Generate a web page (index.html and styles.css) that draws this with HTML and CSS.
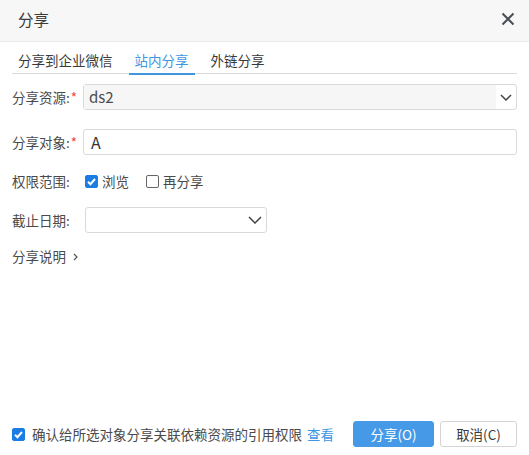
FILE: index.html
```html
<!DOCTYPE html>
<html lang="zh">
<head>
<meta charset="utf-8">
<title>分享</title>
<link rel="stylesheet" href="styles.css">
</head>
<body>
<div class="dialog">
  <div class="titlebar">
    <span class="title">分享</span>
    <svg class="close" width="14" height="14" viewBox="0 0 14 14"><path d="M1.5 1.5 L12.5 12.5 M12.5 1.5 L1.5 12.5" stroke="#4b4d57" stroke-width="2" fill="none"/></svg>
  </div>
  <div class="tabs">
    <div class="tab">分享到企业微信</div>
    <div class="tab active">站内分享</div>
    <div class="tab">外链分享</div>
  </div>
  <div class="form">
    <div class="row r1">
      <span class="label">分享资源:<em>*</em></span>
      <div class="select full">
        <div class="select-value">ds2</div>
        <div class="select-arrow"><svg width="12" height="7" viewBox="0 0 12 7"><path d="M1 1 L6 6 L11 1" stroke="#444" stroke-width="1.5" fill="none"/></svg></div>
      </div>
    </div>
    <div class="row r2">
      <span class="label">分享对象:<em>*</em></span>
      <div class="input full"><span class="token">A</span></div>
    </div>
    <div class="row r3">
      <span class="label">权限范围:</span>
      <div class="checks">
        <span class="check-item"><span class="cb checked"><svg width="13" height="13" viewBox="0 0 13 13"><path d="M3 6.8 L5.4 9.2 L10 4" stroke="#fff" stroke-width="2" fill="none"/></svg></span>浏览</span>
        <span class="check-item"><span class="cb"></span>再分享</span>
      </div>
    </div>
    <div class="row r4">
      <span class="label">截止日期:</span>
      <div class="select date">
        <div class="date-value"></div>
        <div class="date-arrow"><svg width="14" height="8" viewBox="0 0 14 8"><path d="M1 1 L7 7 L13 1" stroke="#444" stroke-width="1.5" fill="none"/></svg></div>
      </div>
    </div>
    <div class="row r5">
      <span class="expander">分享说明<svg width="5" height="8" viewBox="0 0 5 8"><path d="M1 1 L4 4 L1 7" stroke="#555" stroke-width="1.2" fill="none"/></svg></span>
    </div>
  </div>
  <div class="footer">
    <div class="confirm">
      <span class="cb checked"><svg width="13" height="13" viewBox="0 0 13 13"><path d="M3 6.8 L5.4 9.2 L10 4" stroke="#fff" stroke-width="2" fill="none"/></svg></span>
      <span class="confirm-text">确认给所选对象分享关联依赖资源的引用权限</span>
      <a class="link">查看</a>
    </div>
    <div class="buttons">
      <button class="btn primary">分享(O)</button>
      <button class="btn">取消(C)</button>
    </div>
  </div>
</div>
</body>
</html>
```
FILE: styles.css
```css
* { box-sizing: border-box; }
html, body { margin: 0; padding: 0; }
body {
  width: 529px;
  height: 455px;
  background: #fff;
  font-family: "Noto Sans CJK SC", "Microsoft YaHei", sans-serif;
  font-size: 13.5px;
  color: #4a4a4a;
  overflow: hidden;
}
.dialog {
  display: flex;
  flex-direction: column;
  height: 455px;
}
.titlebar {
  height: 42px;
  flex: none;
  background: #f7f7f7;
  border-bottom: 1px solid #ebebeb;
  display: flex;
  align-items: center;
  justify-content: space-between;
  padding: 0 14px 4px 18px;
}
.title {
  font-size: 15.5px;
  color: #3a3a3a;
  line-height: 20px;
}
.close { display: block; }
.tabs {
  margin: 0 12px;
  height: 32px;
  border-bottom: 1px solid #dadada;
  display: flex;
  gap: 10px;
  flex: none;
}
.tab {
  position: relative;
  padding: 8px 6px 0;
  line-height: 20px;
  color: #3a3a3a;
}
.tab.active { color: #3e96e2; }
.tab.active::after {
  content: "";
  position: absolute;
  left: 0;
  right: 0;
  bottom: -2px;
  height: 2px;
  background: #3e96e2;
}
.form {
  padding: 0 12px;
  display: flex;
  flex-direction: column;
}
.row {
  display: flex;
  align-items: center;
  height: 26px;
}
.r1 { margin-top: 10px; }
.r2 { margin-top: 19px; }
.r3 { margin-top: 13px; }
.r4 { margin-top: 13px; }
.r5 { margin-top: 10px; }
.label {
  width: 71px;
  flex: none;
  color: #4a4a4a;
  line-height: 20px;
  white-space: nowrap;
}
.label em {
  font-style: normal;
  color: #f03e3e;
  margin-left: 1px;
}
.full { flex: 1; }
.select, .input {
  height: 26px;
  border: 1px solid #d9d9d9;
  border-radius: 3px;
  display: flex;
  align-items: stretch;
  background: #fff;
}
.select-value {
  flex: 1;
  background: #f6f6f6;
  padding-left: 5px;
  font-size: 15px;
  line-height: 24px;
  color: #4a4a4a;
}
.select-arrow {
  width: 20px;
  display: flex;
  align-items: center;
  justify-content: center;
  padding-right: 1px;
}
.input { padding-left: 7px; align-items: center; }
.token {
  font-size: 16px;
  color: #333;
  line-height: 20px;
}
.checks {
  display: flex;
  gap: 17px;
  margin-left: 2px;
}
.check-item {
  display: flex;
  align-items: center;
  line-height: 20px;
  color: #4a4a4a;
}
.cb {
  width: 13px;
  height: 13px;
  border: 1px solid #666;
  border-radius: 2px;
  margin-right: 4px;
  display: inline-flex;
  flex: none;
  background: #fff;
}
.cb svg { display: block; margin: -1px; }
.cb.checked {
  background: #1b7ce4;
  border-color: #1b7ce4;
}
.date {
  width: 182px;
  margin-left: 2px;
}
.date-value { flex: 1; }
.date-arrow {
  width: 20px;
  display: flex;
  align-items: center;
  justify-content: center;
  padding-right: 3px;
}
.expander {
  display: flex;
  align-items: center;
  gap: 7px;
  line-height: 20px;
  color: #4a4a4a;
}
.expander svg { margin-top: 2px; }
.footer {
  margin-top: auto;
  padding: 0 12px 8px;
  display: flex;
  align-items: center;
  justify-content: space-between;
}
.confirm {
  display: flex;
  align-items: center;
  line-height: 20px;
}
.confirm .cb { margin-right: 7px; }
.confirm-text { color: #4a4a4a; }
.link {
  color: #3e96e2;
  margin-left: 5px;
}
.buttons {
  display: flex;
  gap: 6px;
}
.btn {
  height: 26px;
  border: 1px solid #d4d4d4;
  border-radius: 3px;
  background: #fff;
  color: #3a3a3a;
  font-family: inherit;
  font-size: 13.5px;
  padding: 0;
  width: 77px;
  line-height: 24px;
}
.btn.primary {
  width: 81px;
  background: #4599e6;
  border-color: #4599e6;
  color: #fff;
}
```
